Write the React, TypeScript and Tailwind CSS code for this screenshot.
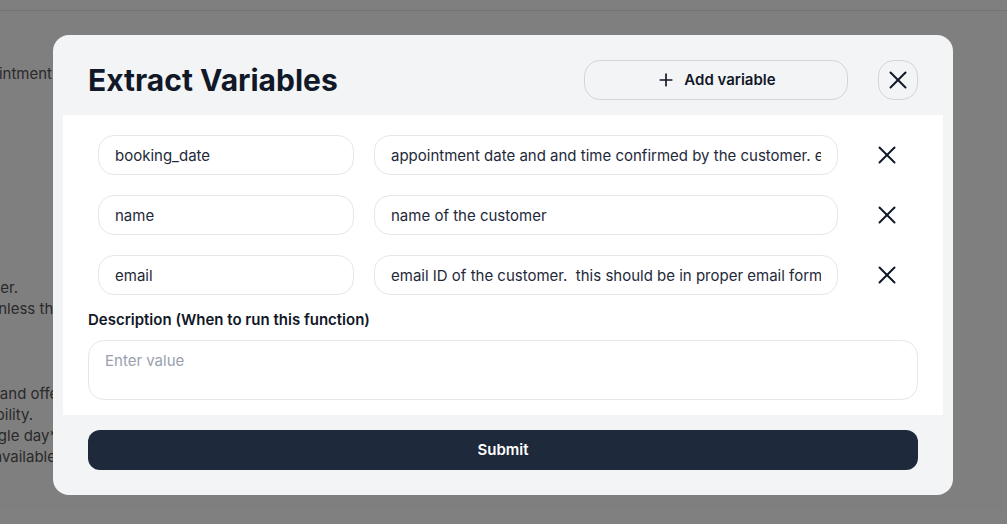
import React from 'react';
import { Plus, X } from 'lucide-react';

const VARIABLES = [
  {
    name: 'booking_date',
    description: 'appointment date and and time confirmed by the customer. eg: 12th March 2025, 4:30 PM',
  },
  { name: 'name', description: 'name of the customer' },
  {
    name: 'email',
    description: 'email ID of the customer.  this should be in proper email format',
  },
];

// page text that peeks out from behind the overlay
const BG_LINES = [
  { text: 'Confirm the appointment', w: 'w-[52px]', mt: 'mt-[52px]' },
  { text: 'Ask for the name of the customer.', w: 'w-[18px]', mt: 'mt-[193px]' },
  { text: 'Do not book the slot unless the', w: 'w-[62px]', mt: 'mt-0' },
  { text: 'Check the calendar and offer', w: 'w-[64px]', mt: 'mt-[64px]' },
  { text: 'slots as per availability.', w: 'w-[33px]', mt: 'mt-0' },
  { text: 'Only one slot on a single day*', w: 'w-[57px]', mt: 'mt-0' },
  { text: 'if no slots are available', w: 'w-[56px]', mt: 'mt-0' },
];

export default function App() {
  return (
    <div className="relative h-[524px] w-full overflow-hidden bg-white font-['Inter','Noto_Sans',sans-serif]">
      {/* page behind */}
      <div className="h-[11px] border-b border-gray-200" />
      <div className="flex flex-col text-[15px] leading-[21px] text-[#555]">
        {BG_LINES.map((l, i) => (
          <div key={i} className={`flex justify-end ${l.w} ${l.mt}`}>
            <span className="whitespace-nowrap">{l.text}</span>
          </div>
        ))}
      </div>

      {/* overlay */}
      <div className="absolute inset-0 flex items-start justify-start bg-black/50 pt-[35px] pl-[53px]">
        <div className="flex w-[900px] flex-col rounded-2xl bg-[#f3f4f6] pb-[25px]">
          {/* Header */}
          <div className="flex items-center justify-between px-[35px] pt-[25px] pb-[15px]">
            <h2 className="text-[30px] leading-10 font-bold text-[#111827]">Extract Variables</h2>
            <div className="flex items-center gap-[30px]">
              <button className="flex h-10 w-[264px] items-center justify-center gap-2 rounded-2xl border border-gray-300 text-[15px] font-semibold text-[#111827]">
                <Plus size={20} strokeWidth={2} />
                Add variable
              </button>
              <button className="flex h-10 w-10 items-center justify-center rounded-2xl border border-gray-300 text-[#111827]">
                <X size={30} strokeWidth={1.6} />
              </button>
            </div>
          </div>

          {/* Body */}
          <div className="mx-[10px] flex flex-col bg-white px-[25px] pt-5 pb-[15px]">
            <div className="flex flex-col gap-5 px-[10px]">
              {VARIABLES.map(v => (
                <div key={v.name} className="flex items-center gap-5">
                  <input
                    readOnly
                    defaultValue={v.name}
                    className="h-10 w-[256px] rounded-2xl border border-gray-200 bg-white px-4 text-[15px] text-gray-800 outline-none"
                  />
                  <input
                    readOnly
                    defaultValue={v.description}
                    className="h-10 w-[464px] rounded-2xl border border-gray-200 bg-white px-4 text-[15px] text-gray-800 outline-none"
                  />
                  <button className="ml-[9px] flex h-10 w-10 items-center justify-center text-[#111827]">
                    <X size={30} strokeWidth={1.6} />
                  </button>
                </div>
              ))}
            </div>

            <label className="mt-[15px] text-[15px] leading-5 font-semibold text-[#111827]">
              Description (When to run this function)
            </label>
            <textarea
              placeholder="Enter value"
              className="mt-[10px] h-[60px] w-full resize-none rounded-2xl border border-gray-200 bg-white px-4 py-[9px] text-[15px] text-gray-800 outline-none placeholder:text-gray-400"
            />
          </div>

          {/* Footer */}
          <div className="px-[35px] pt-[15px]">
            <button className="h-10 w-full rounded-xl bg-[#1e293b] text-[15px] font-semibold text-white">
              Submit
            </button>
          </div>
        </div>
      </div>
    </div>
  );
}
